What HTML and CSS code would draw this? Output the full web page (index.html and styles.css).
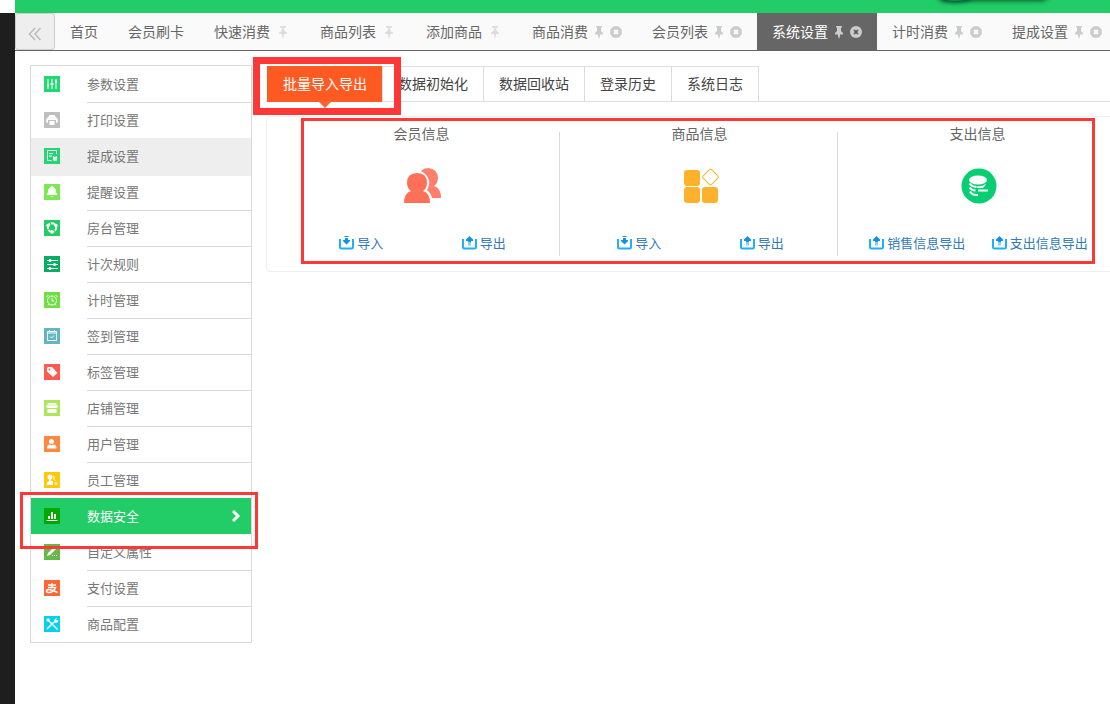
FILE: index.html
```html
<!DOCTYPE html>
<html lang="zh-CN">
<head>
<meta charset="utf-8">
<title>系统设置</title>
<link rel="stylesheet" href="styles.css">
</head>
<body>
<svg class="defs" aria-hidden="true">
  <symbol id="unpin" viewBox="0 0 14 14"><path d="M4 1h6v1L8.500 3.500h-3L4 2zM6 4h2l.5 2L11 7.500V9H8v1l-1 4-1-4V9H3V7.500L5.500 6z"/></symbol>
  <symbol id="pin" viewBox="0 0 10 14"><path d="M2 1h6v1L7 3v3l2 2v1.500H6V11l-1 3-1-3V9.500H1V8l2-2V3L2 2z"/></symbol>
  <symbol id="close" viewBox="0 0 12 12"><circle cx="6" cy="6" r="6"/><path class="cross" d="M4 4l4 4M8 4l-4 4"/></symbol>
  <symbol id="import" viewBox="0 0 15 14"><path fill="none" stroke="#1fb0f8" stroke-width="2" d="M1 3v8q0 1.500 1.500 1.500h10q1.500 0 1.500-1.500V3"/><path fill="#1490e8" d="M5.500 0h4v1h-4zM6 2h3v2h2v1L7.500 8.500 4 5V4h2z"/></symbol>
  <symbol id="export" viewBox="0 0 15 14"><path fill="none" stroke="#1fb0f8" stroke-width="2" d="M1 3v8q0 1.500 1.500 1.500h10q1.500 0 1.500-1.500V3"/><path fill="#1490e8" d="M7.500 0L11 3.500V5H9v1H6V5H4V3.500z"/><path fill="#8bcdf7" d="M6 6h3v3.500H6z"/></symbol>
</svg>
<header class="topbar"><span class="topbar-shadow"></span></header>
<div class="rail"></div>
<div class="page">
  <nav class="tabbar" aria-label="页签">
    <button class="collapse" aria-label="收起"><svg width="14" height="14" viewBox="0 0 14 14"><path d="M7 1L1.500 7 7 13M12.500 1L7 7l5.500 6"/></svg></button>
    <button class="tab">首页</button>
    <button class="tab">会员刷卡</button>
    <button class="tab">快速消费<svg class="unpin"><use href="#unpin"/></svg></button>
    <button class="tab">商品列表<svg class="unpin"><use href="#unpin"/></svg></button>
    <button class="tab">添加商品<svg class="unpin"><use href="#unpin"/></svg></button>
    <button class="tab">商品消费<svg class="pin"><use href="#pin"/></svg><svg class="close"><use href="#close"/></svg></button>
    <button class="tab">会员列表<svg class="pin"><use href="#pin"/></svg><svg class="close"><use href="#close"/></svg></button>
    <button class="tab current">系统设置<svg class="pin"><use href="#pin"/></svg><svg class="close"><use href="#close"/></svg></button>
    <button class="tab">计时消费<svg class="pin"><use href="#pin"/></svg><svg class="close"><use href="#close"/></svg></button>
    <button class="tab">提成设置<svg class="pin"><use href="#pin"/></svg><svg class="close"><use href="#close"/></svg></button>
  </nav>
  <div class="body">
    <nav class="menu" aria-label="设置菜单">
      <a href="#" class="item"><svg class="ico green" viewBox="0 0 16 16"><path class="line" d="M4 3v10M8 3v10M12 3v10"/><path class="fill" d="M3 8h2v3H3zM6.500 7h3v2h-3zM11 4h2v3h-2z"/></svg><span class="label">参数设置</span></a>
      <a href="#" class="item"><svg class="ico gray" viewBox="0 0 16 16"><path class="fill" d="M5.500 3h5L12 5.500H4zM4 5.500h8q2 .5 2 3T12 11V8H4v3q-2 0-2-2.500t2-3zM5.500 9h5v4h-5z"/></svg><span class="label">打印设置</span></a>
      <a href="#" class="item hovered"><svg class="ico green" viewBox="0 0 16 16"><path class="line" d="M7.500 12.500h-4v-10h9V6M5 5.500h4M5 8h3"/><path class="fill" d="M9 8l2 1 2-1v4l-1 1h-2l-1-1z"/></svg><span class="label">提成设置</span></a>
      <a href="#" class="item"><svg class="ico lime" viewBox="0 0 16 16"><path class="fill" d="M8 2q1 0 1 1 3 1 3 5l1.500 3h-11L4 8q0-4 3-5 0-1 1-1zM6.500 12h3L8 13z"/></svg><span class="label">提醒设置</span></a>
      <a href="#" class="item"><svg class="ico leaf" viewBox="0 0 16 16"><circle class="ring" cx="8" cy="7.500" r="4.200"/><circle class="fill" cx="4" cy="5.500" r="1.700"/><circle class="fill" cx="12" cy="5.500" r="1.700"/><circle class="fill" cx="8" cy="12" r="1.700"/><path class="slit" d="M6.500 2.500v2M3 10l2-1M11 12l-1-2"/></svg><span class="label">房台管理</span></a>
      <a href="#" class="item"><svg class="ico deep" viewBox="0 0 16 16"><path class="line" d="M3 4.500h11M3 8.500h11M3 12.500h11"/><circle class="fill" cx="6" cy="4.500" r="1.500"/><circle class="fill" cx="10.500" cy="8.500" r="1.500"/><circle class="fill" cx="6" cy="12.500" r="1.500"/></svg><span class="label">计次规则</span></a>
      <a href="#" class="item"><svg class="ico lime2" viewBox="0 0 16 16"><circle class="line" cx="8" cy="8.500" r="4.500"/><path class="line" d="M8 6v3h2M2.500 5l2-2M13.500 5l-2-2M5 12l-1 1.500M11 12l1 1.500"/></svg><span class="label">计时管理</span></a>
      <a href="#" class="item"><svg class="ico teal" viewBox="0 0 16 16"><path class="line" d="M3.500 3.500h9v9h-9zM3.500 5h9M5.500 2v2M10.500 2v2M6 8.500l1.500 1.500L10 7.500"/></svg><span class="label">签到管理</span></a>
      <a href="#" class="item"><svg class="ico red" viewBox="0 0 16 16"><path class="fill" d="M3 4l1-1h4l5.500 6L9 13 3 7.500z"/><circle cx="5.500" cy="5.500" r="1" fill="#ff5a4f"/></svg><span class="label">标签管理</span></a>
      <a href="#" class="item"><svg class="ico pale" viewBox="0 0 16 16"><path class="fill" d="M4 3h8l2 3.500-1 1.500H3L2 6.500zM3.500 9h9v4h-9z"/><path d="M3 5h10" stroke="#cdf093"/></svg><span class="label">店铺管理</span></a>
      <a href="#" class="item"><svg class="ico orange" viewBox="0 0 16 16"><circle class="fill" cx="7.500" cy="5.500" r="2.500"/><path class="fill" d="M3 12.500q0-4 3-4l1.500 1 1.500-1q3.500 0 3.500 4z"/></svg><span class="label">用户管理</span></a>
      <a href="#" class="item"><svg class="ico yellow" viewBox="0 0 16 16"><circle class="fill" cx="6" cy="5" r="2.500"/><path class="fill" d="M5 7h2v1.500l2 1V13H2.500q0-3 2.500-4z"/><path class="line" d="M9 4q2 1 1 3.500l1.500 1.500"/><circle class="line" cx="12" cy="11.500" r="1"/></svg><span class="label">员工管理</span></a>
      <a href="#" class="item active" aria-current="page"><svg class="ico dark" viewBox="0 0 16 16"><path class="fill" d="M4 8h2v3H4zM7 4h2v7H7zM10 6h2v5h-2zM2.500 12h11v1h-11z"/></svg><span class="label">数据安全</span><svg class="arrow" viewBox="0 0 10 12"><path d="M2 1l5 5-5 5"/></svg><i class="mark mark-menu"></i></a>
      <a href="#" class="item"><svg class="ico moss" viewBox="0 0 16 16"><path class="fill" d="M3 12l1-3 6-6 2 2-6 6zM8 11h1v1H8zM10 11h1v1h-1zM12 11h1v1h-1z"/></svg><span class="label">自定义属性</span></a>
      <a href="#" class="item"><svg class="ico flame" viewBox="0 0 16 16"><path class="line thick" d="M4 5h8M8 3v4.500M4 7.500h7.500Q10 11.500 6 12.500H4q-1.500 0-1.500-1.500T4.500 9.500q3 0 9 3"/></svg><span class="label">支付设置</span></a>
      <a href="#" class="item"><svg class="ico cyan" viewBox="0 0 16 16"><path class="line thick" d="M4.500 4.500l5 5M3 13l7-7"/><path class="fill" d="M2 4l2-2 1.500 1v2.500H3.500zM10 5l1-2 2-1-1 2 1 .5L14.500 4l-1 2.500-3 .5zM10 9l4 4-1 1-4-4z"/></svg><span class="label">商品配置</span></a>
    </nav>
    <main class="content">
      <div class="subtabs">
        <button class="subtab selected">批量导入导出<i class="mark mark-tab"></i></button>
        <button class="subtab">数据初始化</button>
        <button class="subtab">数据回收站</button>
        <button class="subtab">登录历史</button>
        <button class="subtab">系统日志</button>
      </div>
      <div class="panel">
        <section class="card">
          <h2>会员信息</h2>
          <svg class="big" viewBox="0 0 38 36"><path fill="#ff7f6c" d="M17 3Q20 0 24 0q10 1 10 10 0 5-4 8 7 2 7 12h-9q-1-5-5-8 3-5 2-10-2-6-8-9z"/><path fill="#ff7058" stroke="#fff" stroke-width="1.500" paint-order="stroke" d="M13 5q10 0 10 10 0 5-4 8 7 2 7 12H0q0-10 7-12-4-3-4-8Q3 5 13 5z"/></svg>
          <div class="actions">
            <a href="#"><svg><use href="#import"/></svg>导入</a>
            <a href="#"><svg><use href="#export"/></svg>导出</a>
          </div>
        </section>
        <section class="card">
          <h2>商品信息</h2>
          <svg class="big" viewBox="0 0 38 36"><g fill="#ffb12b"><rect x="2" y="2" width="16" height="16" rx="3"/><rect x="2" y="19" width="16" height="16" rx="3"/><rect x="20" y="19" width="16" height="16" rx="3"/></g><rect x="22.500" y="3" width="12" height="12" rx="2" transform="rotate(45 28.500 9)" fill="none" stroke="#ffb12b"/></svg>
          <div class="actions">
            <a href="#"><svg><use href="#import"/></svg>导入</a>
            <a href="#"><svg><use href="#export"/></svg>导出</a>
          </div>
        </section>
        <section class="card">
          <h2>支出信息</h2>
          <svg class="big" viewBox="0 0 38 36"><circle cx="19" cy="18" r="17.500" fill="#06ce72"/><ellipse cx="18" cy="12" rx="9" ry="4.500" fill="#fff"/><path fill="none" stroke="#fff" stroke-width="2" d="M9.500 15.500q2 3 7 3.500M9.500 19.500q2 3 6 3M10 23.500q2 4 8 3.500M18 22.500h10"/><path fill="#fff" d="M17 18.500q6 0 9-3-1 3-3 4.500h-6z"/></svg>
          <div class="actions">
            <a href="#"><svg><use href="#export"/></svg>销售信息导出</a>
            <a href="#"><svg><use href="#export"/></svg>支出信息导出</a>
          </div>
        </section>
        <i class="mark mark-panel"></i>
      </div>
    </main>
  </div>
</div>
</body>
</html>
```

FILE: styles.css
```css
* { box-sizing: border-box; }
body {
  margin: 0;
  min-height: 100vh;
  display: grid;
  grid-template-columns: 15px minmax(0, 1fr);
  grid-template-rows: 13px 1fr;
  overflow: hidden;
  background: #fff;
  font: 14px/20px "Noto Sans CJK SC", sans-serif;
  color: #666;
}
.defs { position: absolute; width: 0; height: 0; }
button { border: 0; margin: 0; padding: 0; background: none; font: inherit; color: inherit; cursor: pointer; }
a { text-decoration: none; color: inherit; }
svg { flex: none; }

.topbar { grid-column: 2; position: relative; overflow: hidden; background: #22cc66; }
.topbar-shadow {
  position: absolute;
  right: 62px;
  top: -14px;
  width: 108px;
  height: 14px;
  border-radius: 8px;
  background: #085;
  box-shadow: 0 0 5px 1px #075a33;
}
.topbar-shadow::before {
  content: "";
  position: absolute;
  left: 0;
  bottom: -1px;
  width: 30px;
  height: 8px;
  border-radius: 50%;
  box-shadow: 0 0 5px 1px #043;
}
.rail { grid-row: 2; background: #1e1e1e; }
.page { grid-row: 2; min-width: 0; }

.tabbar { display: flex; height: 38px; background: #fafafa; border-bottom: 1px solid #666; overflow: hidden; }
.collapse { flex: none; width: 40px; display: flex; align-items: center; justify-content: center; padding-top: 4px; background: #eee; border: 1px solid #ccc; border-radius: 3px; }
.collapse path { fill: none; stroke: #bbb; stroke-width: 1.5; }
.tab { flex: none; display: flex; align-items: center; gap: 6px; padding: 0 15px 2px; white-space: nowrap; }
.tab svg { position: relative; top: 1px; fill: #ccc; height: 14px; }
.tab .unpin { width: 14px; fill: #ddd; }
.tab .pin { width: 10px; }
.tab .close { width: 12px; height: 12px; }
.cross { fill: none; stroke: var(--tab-bg, #fafafa); stroke-width: 2; }
.current { --tab-bg: #666; background: #666; color: #fff; }

.body { display: flex; align-items: flex-start; gap: 14px; padding: 14px 0 0 15px; }
.menu { flex: none; width: 222px; border: 1px solid #d9d9d9; font-size: 13px; color: #777; }
.item { display: flex; align-items: center; height: 36px; padding-left: 13px; position: relative; }
.ico { width: 16px; height: 16px; margin-right: 27px; }
.label { flex: 1; height: 36px; line-height: 34px; border-top: 1px solid #d9d9d9; }
.item:first-child .label, .hovered .label, .hovered + .item .label, .active .label, .active + .item .label { border-color: transparent; }
.hovered { background: #eee; box-shadow: 0 2px 0 #eee; }
.active { background: #22cc66; color: #fff; }
.arrow { width: 10px; height: 12px; margin-right: 10px; }
.arrow path { fill: none; stroke: #fff; stroke-width: 3; }
.fill { fill: #fff; }
.line { fill: none; stroke: #fff; }
.ring { fill: none; stroke: #fff; stroke-width: 2; }
.thick { stroke-width: 1.5; }
.slit { stroke: #22cc66; }
.green { background: #22d873; }
.gray { background: #bfbfbf; }
.lime { background: #7be854; }
.leaf { background: #22cc66; }
.deep { background: #07ad63; }
.lime2 { background: #6fde43; }
.teal { background: #62b5c4; }
.red { background: #ff5a4f; }
.pale { background: #aee65b; }
.orange { background: #ff8840; }
.yellow { background: #ffc90a; }
.dark { background: #00a800; }
.moss { background: #65b94b; }
.flame { background: #ff6633; }
.cyan { background: #06d0f0; }

.content { flex: 1; min-width: 0; padding-top: 1px; }
.subtabs { display: flex; height: 36px; padding-left: 1px; border-bottom: 1px solid #ddd; color: #444; }
.subtab { position: relative; height: 36px; padding: 0 15px 2px; border: 1px solid #ddd; border-right: 0; }
.subtab:last-child { border-right: 1px solid #ddd; }
.selected { background: #ff5a22; border-color: #ff5a22; color: #fff; z-index: 1; }
.selected::after { content: ""; position: absolute; left: 50%; top: 100%; margin-left: -7px; border: 7px solid transparent; border-top-color: #ff6633; border-bottom: 0; }
.panel {
  position: relative;
  display: grid;
  grid-template-columns: repeat(3, minmax(0, 1fr));
  margin: 14px -22px 0 0;
  padding: 15px;
  border: 1px solid #eee;
  border-radius: 4px;
}
.card { display: flex; flex-direction: column; align-items: center; height: 124px; padding-left: 2px; border-right: 1px solid #d9d9d9; }
.card:nth-of-type(3) { border-color: transparent; }
.card h2 { margin: -9px 0 0; font-size: 14px; line-height: 20px; font-weight: 400; }
.big { width: 38px; height: 36px; margin: 25px 0 0 3px; }
.actions { align-self: stretch; display: grid; grid-template-columns: 1fr 1fr; justify-items: center; padding: 0 14px 0 16px; margin-top: 29px; font-size: 13px; color: #337ab7; }
.actions a { display: flex; align-items: center; gap: 3px; white-space: nowrap; }
.actions svg { width: 15px; height: 14px; }

.mark { position: absolute; border: 3px solid #fe3737; pointer-events: none; z-index: 2; }
.mark-tab { border-width: 7px; left: -15px; right: -19px; top: -10px; bottom: -14px; }
.mark-menu { left: -11px; right: -7px; top: -6px; bottom: -15px; }
.mark-panel { left: 34px; right: 36px; top: 1px; bottom: 7px; }
```
